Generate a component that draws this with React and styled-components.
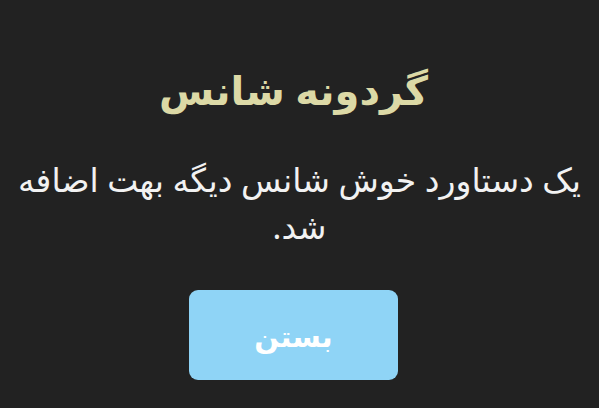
import React from "react";
import styled, { createGlobalStyle } from "styled-components";

const Global = createGlobalStyle`
  html, body { margin: 0; padding: 0; background: #222222; }
  body { font-family: "Noto Sans", "DejaVu Sans", sans-serif; }
`;

const Dialog = styled.div`
  direction: rtl;
  width: 599px;
  height: 408px;
  box-sizing: border-box;
  background: #222222;
  display: flex;
  flex-direction: column;
  align-items: center;
  padding: 62px 14px 0;
`;

const Title = styled.h1`
  margin: 0 12px 0 0;
  font-size: 40px;
  font-weight: 700;
  line-height: 56px;
  color: #dcd9a6;
`;

const Message = styled.p`
  margin: 38px 0 0;
  max-width: 571px;
  font-size: 33px;
  line-height: 47px;
  color: #f2f2f2;
  text-align: center;
`;

const CloseButton = styled.button`
  margin: 40px 12px 0 0;
  width: 209px;
  height: 90px;
  border: none;
  border-radius: 9px;
  background: #8fd4f6;
  color: #ffffff;
  font-family: inherit;
  font-size: 29px;
  font-weight: 600;
  cursor: pointer;
`;

export default function App() {
  return (
    <>
      <Global />
      <Dialog>
        <Title>گردونه شانس</Title>
        <Message>یک دستاورد خوش شانس دیگه بهت اضافه شد.</Message>
        <CloseButton>بستن</CloseButton>
      </Dialog>
    </>
  );
}
